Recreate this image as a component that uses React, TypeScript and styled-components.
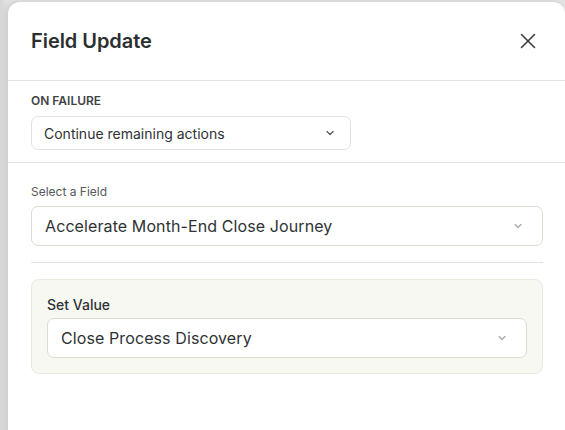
import React from 'react';
import styled, { createGlobalStyle } from 'styled-components';

const GlobalStyle = createGlobalStyle`
  html, body {
    margin: 0;
    padding: 0;
    height: 100%;
    overflow: hidden;
  }
  body {
    background: #d9d9d9;
    font-family: Inter, "Noto Sans", sans-serif;
    -webkit-font-smoothing: antialiased;
  }
`

const Backdrop = styled.div`
  width: 565px;
  height: 430px;
  padding: 2px 0 0 8px;
  box-sizing: border-box;
  background: linear-gradient(90deg, #d6d6d6 0, #e4e4e4 8px);
  overflow: hidden;
`

const Sheet = styled.div`
  width: 557px;
  height: 460px;
  background: #fff;
  border-radius: 12px 12px 0 0;
  box-shadow: -2px 0 6px rgba(0,0,0,0.12);
  display: flex;
  flex-direction: column;
`

const Header = styled.div`
  display: flex;
  align-items: center;
  justify-content: space-between;
  height: 78px;
  padding: 0 23px 0 23px;
  border-bottom: 1px solid #e4e4e4;
`

const Title = styled.h2`
  margin: 0;
  font-size: 20px;
  font-weight: 600;
  color: #2b2f30;
  letter-spacing: -0.05px;
`

const CloseBtn = styled.button`
  border: none;
  background: none;
  padding: 4px;
  margin-right: 2px;
  display: flex;
  cursor: pointer;
  color: #3a3d3e;
`

const Section = styled.div<{ $bordered?: boolean }>`
  display: flex;
  flex-direction: column;
  padding: 12px 22px 12px 23px;
  border-bottom: ${p => (p.$bordered ? '1px solid #e4e4e4' : 'none')};
`

const Body = styled.div`
  display: flex;
  flex-direction: column;
  padding: 21px 22px 0 23px;
`

const Caption = styled.label<{ $upper?: boolean }>`
  font-size: 12px;
  line-height: 16px;
  color: ${p => (p.$upper ? '#3f4345' : '#55595b')};
  font-weight: ${p => (p.$upper ? 600 : 400)};
  text-transform: ${p => (p.$upper ? 'uppercase' : 'none')};
  margin-bottom: ${p => (p.$upper ? '7px' : '6px')};
`

const Select = styled.div<{ $small?: boolean; $width?: string }>`
  display: flex;
  align-items: center;
  justify-content: space-between;
  box-sizing: border-box;
  width: ${p => p.$width || '100%'};
  height: ${p => (p.$small ? '34px' : '40px')};
  padding: ${p => (p.$small ? '0 14px 0 12px' : '0 18px 0 13px')};
  background: #fff;
  border: 1px solid ${p => (p.$small ? '#e2e2e2' : '#dedbd0')};
  border-radius: 7px;
  font-size: ${p => (p.$small ? '14px' : '16px')};
  letter-spacing: ${p => (p.$small ? '0' : '0.1px')};
  color: #2e3234;
`

const Chevron = styled.svg<{ $dark?: boolean }>`
  width: 12px;
  height: 12px;
  color: ${p => (p.$dark ? '#555' : '#a6a6a6')};
  flex-shrink: 0;
`

const Divider = styled.hr`
  border: none;
  border-top: 1px solid #e4e4e4;
  margin: 16px 0 16px;
`

const ValuePanel = styled.div`
  display: flex;
  flex-direction: column;
  padding: 16px 15px 15px 15px;
  background: #f8f8f3;
  border: 1px solid #ebe9df;
  border-radius: 8px;
`

const PanelLabel = styled.div`
  font-size: 14px;
  line-height: 18px;
  font-weight: 500;
  color: #2e3234;
  margin-bottom: 4px;
`

const Arrow = ({ dark }: { dark?: boolean }) => (
  <Chevron $dark={dark} viewBox="0 0 12 12" fill="none">
    <path d="M3 4.5L6 7.5L9 4.5" stroke="currentColor" strokeWidth="1.2" strokeLinecap="round" strokeLinejoin="round" />
  </Chevron>
)

export default function App() {
  return (
    <>
      <GlobalStyle />
      <Backdrop>
        <Sheet>
          <Header>
            <Title>Field Update</Title>
            <CloseBtn aria-label="Close">
              <svg width="16" height="16" viewBox="0 0 16 16" fill="none">
                <path d="M1.5 1.5L14.5 14.5M14.5 1.5L1.5 14.5" stroke="currentColor" strokeWidth="1.6" strokeLinecap="round" />
              </svg>
            </CloseBtn>
          </Header>
          <Section $bordered>
            <Caption $upper>On failure</Caption>
            <Select $small $width="320px">
              <span>Continue remaining actions</span>
              <Arrow dark />
            </Select>
          </Section>
          <Body>
            <Caption>Select a Field</Caption>
            <Select>
              <span>Accelerate Month-End Close Journey</span>
              <Arrow />
            </Select>
            <Divider />
            <ValuePanel>
              <PanelLabel>Set Value</PanelLabel>
              <Select>
                <span>Close Process Discovery</span>
                <Arrow />
              </Select>
            </ValuePanel>
          </Body>
        </Sheet>
      </Backdrop>
    </>
  );
}
